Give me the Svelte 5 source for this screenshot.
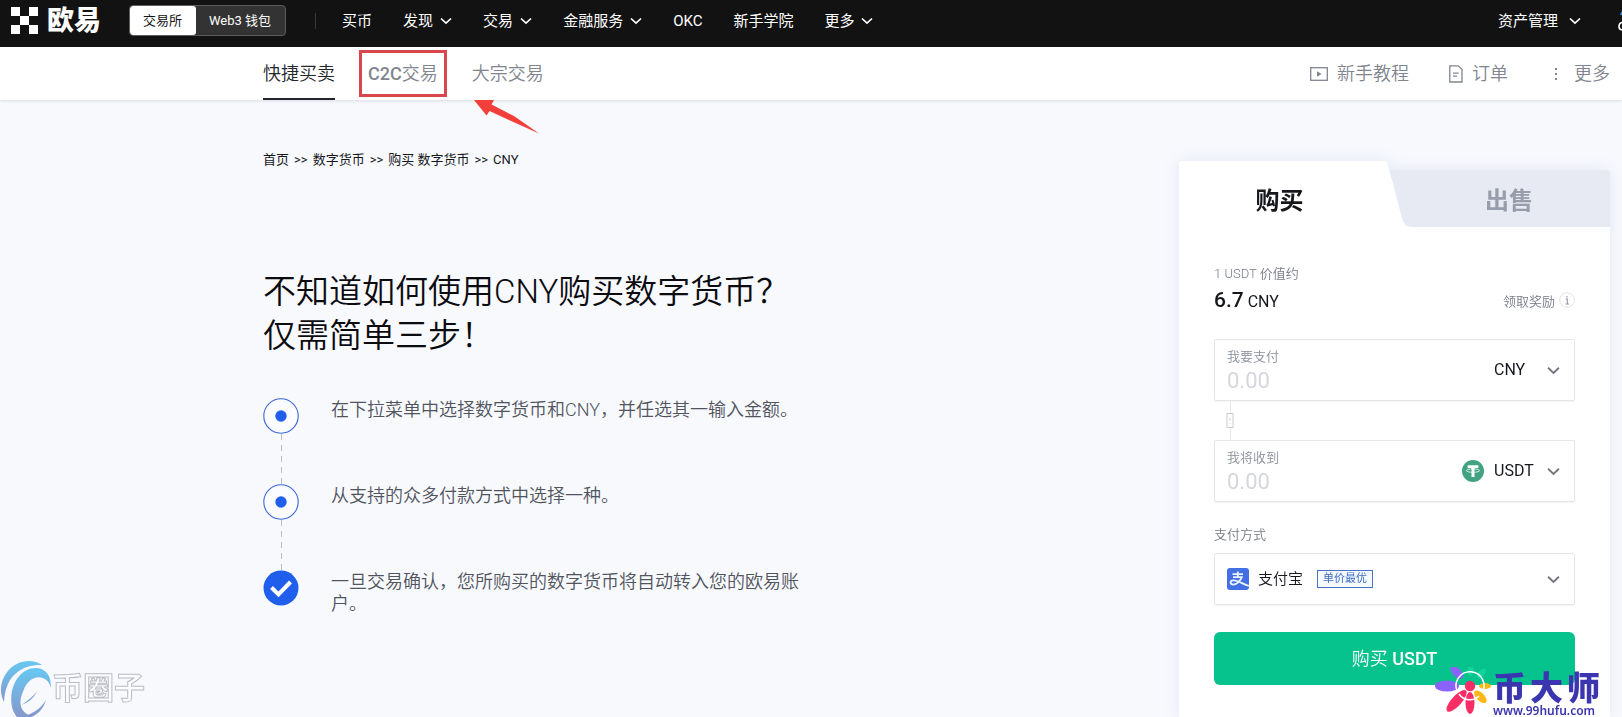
<script>
  const mainNav = [
    { label: '买币' },
    { label: '发现', menu: true },
    { label: '交易', menu: true },
    { label: '金融服务', menu: true },
    { label: 'OKC' },
    { label: '新手学院' },
    { label: '更多', menu: true }
  ];

  const steps = [
    { text: '在下拉菜单中选择数字货币和CNY，并任选其一输入金额。' },
    { text: '从支持的众多付款方式中选择一种。' },
    { text: '一旦交易确认，您所购买的数字货币将自动转入您的欧易账户。', done: true }
  ];
</script>

{#snippet chevron()}
  <svg class="chevron" viewBox="0 0 12 8" width="12" height="8" aria-hidden="true">
    <path d="M1 1.5 L6 6.2 L11 1.5" fill="none" stroke="currentColor" stroke-width="1.7" />
  </svg>
{/snippet}

<div class="page">
  <header class="topbar">
    <a class="brand" href="#home">
      <svg viewBox="0 0 27 27" width="27" height="27" aria-hidden="true">
        <path d="M0 0h9v9H0zM18 0h9v9h-9zM9 9h9v9H9zM0 18h9v9H0zM18 18h9v9h-9z" fill="#fff" />
      </svg>
      <span>欧易</span>
    </a>
    <div class="switch">
      <button class="on">交易所</button>
      <button>Web3 钱包</button>
    </div>
    <i class="divider"></i>
    <nav class="main-nav">
      {#each mainNav as item}
        <a href="#nav">{item.label}{#if item.menu}{@render chevron()}{/if}</a>
      {/each}
    </nav>
    <a class="assets" href="#assets">资产管理{@render chevron()}</a>
    <svg class="user" viewBox="0 0 4 24" width="4" height="24" aria-hidden="true">
      <path d="M4 2 Q2 4 2 6 L4 6Z" fill="#2f7fd6" />
      <path d="M4 13.5 Q1 14 1 17.5 Q1 20.5 4 21" fill="none" stroke="#fff" stroke-width="1.6" />
    </svg>
  </header>

  <div class="subbar">
    <nav class="tabs">
      <a class="current" href="#express">快捷买卖</a>
      <a class="c2c" href="#c2c"><b>C2C</b>交易</a>
      <a href="#block">大宗交易</a>
      <svg class="arrow" viewBox="0 0 66 35" width="66" height="35" aria-hidden="true">
        <path d="M0 0 L20 0 L17.5 4.5 L40 16 L65 33.5 L36 20.5 L15.5 11 L12.5 15.5 Z" fill="#f33f3a" />
      </svg>
    </nav>
    <nav class="tools">
      <a href="#guide">
        <svg viewBox="0 0 18 14" width="18" height="14" aria-hidden="true">
          <rect x=".7" y=".7" width="16.6" height="12.6" fill="none" stroke="currentColor" stroke-width="1.3" />
          <path d="M7 4.3 L11.6 7 L7 9.7Z" fill="currentColor" />
        </svg>新手教程</a>
      <a href="#orders">
        <svg viewBox="0 0 14 18" width="14" height="18" aria-hidden="true">
          <path d="M.8 .9 H9.3 L13 4.6 V17 H.8Z M4 8.2 H9.6 M4 11.2 H8" fill="none" stroke="currentColor" stroke-width="1.3" />
        </svg>订单</a>
      <a class="more" href="#more">
        <svg viewBox="0 0 4 14" width="4" height="14" aria-hidden="true">
          <path d="M1 1h2v2H1zM1 6h2v2H1zM1 11h2v2H1z" fill="currentColor" />
        </svg>更多</a>
    </nav>
  </div>

  <main>
    <section class="intro">
      <nav class="crumbs">
        <a href="#home">首页</a><span>&gt;&gt;</span><a href="#crypto">数字货币</a><span>&gt;&gt;</span><a href="#buy">购买 数字货币</a><span>&gt;&gt;</span><span>CNY</span>
      </nav>
      <h1>不知道如何使用CNY购买数字货币？<br />仅需简单三步！</h1>
      <ol>
        {#each steps as step}
          <li>
            <div class="mark">
              {#if step.done}
                <svg viewBox="0 0 36 36" width="36" height="36" aria-hidden="true">
                  <circle cx="18" cy="18" r="17.5" fill="#205fec" />
                  <path d="M8.5 17.5 L15.5 24.5 L27.5 12" fill="none" stroke="#fff" stroke-width="4" />
                </svg>
              {:else}
                <svg viewBox="0 0 36 36" width="36" height="36" aria-hidden="true">
                  <circle cx="18" cy="18" r="17.2" fill="#fafcff" stroke="#3c67d3" stroke-width="1.1" />
                  <circle cx="18" cy="18" r="5.7" fill="#205fec" />
                </svg>
                <i></i>
              {/if}
            </div>
            <p>{step.text}</p>
          </li>
        {/each}
      </ol>
    </section>

    <section class="card">
      <div class="card-tabs">
        <button class="buy">购买</button>
        <svg viewBox="0 0 28 66" width="28" height="66" aria-hidden="true">
          <path d="M4 9 H28.5 V66 H10Z" fill="#e7eaf2" />
          <path d="M0 0 C3 0 3.5 2 4.5 6 L18 57 Q20 66 28 66 H0Z" fill="#fff" />
        </svg>
        <button class="sell">出售</button>
      </div>
      <form class="card-body" onsubmit={(e) => e.preventDefault()}>
        <div class="rate">1 USDT 价值约</div>
        <div class="price">
          <div><strong>6.7</strong> CNY</div>
          <a href="#reward">领取奖励
            <svg viewBox="0 0 16 16" width="16" height="16" aria-hidden="true">
              <circle cx="8" cy="8" r="7.3" fill="#fff" stroke="#e2e4e8" />
              <path d="M8 4v1.5M6.8 7H8.3V12M6.5 12H10" fill="none" stroke="#92969f" stroke-width="1.1" />
            </svg>
          </a>
        </div>

        <div class="field">
          <div class="amount">
            <label for="pay">我要支付</label>
            <input id="pay" type="text" placeholder="0.00" />
          </div>
          <select aria-label="CNY"><option>CNY</option></select>
          {@render chevron()}
        </div>
        <div class="link">
          <svg viewBox="0 0 8 39" width="8" height="39" aria-hidden="true">
            <path d="M4.5 0V12M4.5 28V39" stroke="#e6e8ec" />
            <rect x="1" y="12.5" width="6" height="14" fill="#fff" stroke="#c9ccd3" />
            <path d="M4 17v3M4 22v1" stroke="#d6d8dd" />
          </svg>
        </div>
        <div class="field">
          <div class="amount">
            <label for="get">我将收到</label>
            <input id="get" type="text" placeholder="0.00" />
          </div>
          <svg class="coin" viewBox="0 0 22 22" width="22" height="22" aria-hidden="true">
            <circle cx="11" cy="11" r="11" fill="#41a381" />
            <path d="M5.6 5.2H16.4V8H12.5V17H9.5V8H5.6Z" fill="#fff" />
            <ellipse cx="11" cy="10.6" rx="6.6" ry="1.7" fill="none" stroke="#fff" stroke-width=".8" />
          </svg>
          <select aria-label="USDT"><option>USDT</option></select>
          {@render chevron()}
        </div>

        <label class="method-label" for="method">支付方式</label>
        <div class="field method">
          <svg viewBox="0 0 22 22" width="22" height="22" aria-hidden="true">
            <rect width="22" height="22" rx="3" fill="#446ee3" />
            <path d="M5.5 6.2H16M10.8 3.6V9M6 9.2H14.8C13.4 12.8 10 16.4 6.6 16.6C2.6 16.6 2.6 12.6 6.4 12.4C10.6 12.2 15 15.8 22 18" fill="none" stroke="#e8f4ff" stroke-width="1.8" />
          </svg>
          <select id="method"><option>支付宝</option></select>
          <span class="tag">单价最优</span>
          {@render chevron()}
        </div>
        <button class="submit" type="submit">购买 <b>USDT</b></button>
      </form>
    </section>
  </main>

  <div class="mark-left">
    <svg viewBox="0 0 156 174" width="52" height="58" aria-hidden="true">
      <defs>
        <linearGradient id="swirl" x1="0" y1="0" x2="0" y2="1">
          <stop offset="0" stop-color="#67c8f2" />
          <stop offset="1" stop-color="#8797cb" />
        </linearGradient>
      </defs>
      <path d="M126 15 C96 -6 48 1 22 35 C0 63 -3 98 12 126 C14 88 26 56 50 38 C72 20 98 14 126 15Z" fill="url(#swirl)" />
      <path d="M152 84 C156 50 138 26 110 24 C70 22 38 60 34 108 C32 140 40 160 54 174 H86 C110 168 130 148 138 121 C122 144 104 158 84 164 C58 150 56 122 70 92 C82 58 112 42 136 58 C145 64 150 72 152 84Z" fill="url(#swirl)" />
      <path d="M112 94 C100 116 84 128 66 134 C86 120 100 108 112 94Z" fill="#7fa8d8" />
    </svg>
    <span>币圈子</span>
  </div>

  <div class="mark-right">
    <svg viewBox="0 0 58 50" width="58" height="50" aria-hidden="true">
      <g transform="translate(35 19)">
        <ellipse cx="-23" cy="0" rx="12" ry="5.6" fill="#8b62fb" />
        <ellipse cx="-19" cy="0" rx="8" ry="4.2" fill="#8b62fb" transform="rotate(46)" />
        <ellipse cx="-16" cy="0" rx="6" ry="3" fill="#12d39c" transform="rotate(92)" />
        <ellipse cx="-17" cy="0" rx="6" ry="3" fill="#12d39c" transform="rotate(132)" />
        <ellipse cx="15" cy="0" rx="6" ry="3" fill="#fdb913" />
        <ellipse cx="15" cy="0" rx="8" ry="4" fill="#fdb913" transform="rotate(46)" />
        <ellipse cx="17" cy="0" rx="11" ry="4.5" fill="#fb2d67" transform="rotate(90)" />
        <ellipse cx="20" cy="0" rx="14" ry="5" fill="#fb2d67" transform="rotate(132)" />
        <path d="M-13 5 A14 14 0 1 1 12 7" fill="none" stroke="#fff" stroke-width="1.5" />
        <path d="M-11 8 A13 13 0 0 0 9 10" fill="none" stroke="#fff" stroke-width="1.5" />
        <circle r="5.2" fill="#fb2d67" />
      </g>
    </svg>
    <div>
      <strong><span>币</span><span>大</span><span>师</span></strong>
      <small>www.99hufu.com</small>
    </div>
  </div>
</div>

<style>
  :global(body) {
    background: #f8f9fd;
  }

  .page {
    display: flex;
    flex-direction: column;
    height: 100vh;
    overflow: hidden;
    font-family: Roboto, 'Noto Sans CJK SC', sans-serif;
    color: #15171c;
  }

  a {
    color: inherit;
    text-decoration: none;
  }

  button,
  input,
  select {
    font: inherit;
    color: inherit;
    border: 0;
    padding: 0;
    margin: 0;
    background: none;
  }

  select {
    appearance: none;
    outline: none;
  }

  svg {
    display: block;
    flex: none;
  }

  .topbar {
    display: flex;
    flex: none;
    align-items: center;
    height: 47px;
    box-sizing: border-box;
    padding: 0 0 6px 11px;
    background: #121212;
    color: #fff;
    font-size: 15px;
    line-height: 24px;
  }

  .brand {
    display: flex;
    align-items: center;
    gap: 9px;
    width: 118px;
    font-size: 27px;
    font-weight: 900;
    line-height: 30px;
  }

  .switch {
    display: flex;
    height: 31px;
    box-sizing: border-box;
    border: 1px solid #5c5c5c;
    border-radius: 4px;
    background: #333;
    font-size: 13px;
    overflow: hidden;
  }

  .switch button {
    padding: 0 14px 0 13px;
  }

  .switch .on {
    background: #fff;
    color: #121212;
    border-radius: 3px;
  }

  .divider {
    width: 1px;
    height: 16px;
    margin: 0 26px 0 29px;
    background: #3a3a3a;
  }

  .main-nav {
    display: flex;
    gap: 31px;
  }

  .main-nav a,
  .assets {
    display: flex;
    align-items: center;
    gap: 7px;
    white-space: nowrap;
  }

  .assets {
    gap: 11px;
    margin-left: auto;
    margin-right: 37px;
  }

  .subbar {
    display: flex;
    flex: none;
    justify-content: space-between;
    height: 53px;
    box-sizing: border-box;
    padding: 0 12px 0 263px;
    background: #fff;
    box-shadow: 0 1px 3px rgba(40, 50, 70, 0.14);
    color: #81858f;
    font-size: 18px;
    font-weight: 350;
    line-height: 24px;
  }

  .tabs {
    position: relative;
    display: flex;
  }

  .tabs a {
    box-sizing: border-box;
    padding-top: 15px;
  }

  .tabs .current {
    border-bottom: 2px solid #23262d;
    color: #23262d;
  }

  .tabs .c2c {
    height: 47px;
    margin: 3px 25px 0 24px;
    padding: 9px 6px 0;
    border: 3px solid #d9474c;
  }

  .c2c b {
    font-weight: 500;
  }

  .arrow {
    position: absolute;
    left: 211px;
    top: 53px;
  }

  .tools {
    display: flex;
    align-items: center;
    gap: 40px;
  }

  .tools a {
    display: flex;
    align-items: center;
    gap: 9px;
  }

  .tools .more {
    gap: 16px;
    margin-left: 6px;
  }

  main {
    display: flex;
    flex: 1;
    justify-content: space-between;
    padding: 0 12px 0 263px;
  }

  .intro {
    padding-top: 50px;
  }

  .crumbs {
    display: flex;
    gap: 5px;
    font-size: 13px;
    line-height: 20px;
  }

  h1 {
    margin: 100px 0 40px;
    color: #0b0b10;
    font-size: 33px;
    font-weight: 350;
    line-height: 44px;
  }

  ol {
    margin: 0;
    padding: 0;
    list-style: none;
  }

  li {
    display: flex;
    gap: 32px;
    height: 86px;
  }

  .mark {
    display: flex;
    flex-direction: column;
    align-items: center;
  }

  .mark i {
    flex: 1;
    width: 1px;
    background: repeating-linear-gradient(#b9bdc6 0 6px, transparent 6px 11px);
  }

  li p {
    width: 472px;
    margin: 0;
    padding-top: 1px;
    color: #50545d;
    font-size: 18px;
    font-weight: 350;
    line-height: 22px;
  }

  .card {
    display: flex;
    flex-direction: column;
    width: 431px;
    margin-top: 61px;
    filter: drop-shadow(0 0 8px rgba(70, 110, 180, 0.12));
  }

  .card-tabs {
    display: flex;
    align-items: flex-end;
    font-size: 24px;
    font-weight: 700;
  }

  .buy {
    width: 205px;
    height: 66px;
    padding: 8px 4px 0 0;
    background: #fff;
    border-radius: 3px 0 0;
  }

  .sell {
    flex: 1;
    height: 57px;
    padding: 0 4px 0 0;
    background: #e7eaf2;
    color: #989dab;
    border-radius: 0 3px 0 0;
  }

  .card-body {
    flex: 1;
    padding: 37px 35px 0;
    background: #fff;
  }

  .rate,
  .method-label {
    display: block;
    color: #777b86;
    font-size: 13px;
    font-weight: 350;
    line-height: 20px;
  }

  .price {
    display: flex;
    justify-content: space-between;
    align-items: center;
    height: 32px;
    margin-bottom: 23px;
    font-size: 16px;
  }

  .price strong {
    font-size: 21px;
    font-weight: 500;
  }

  .price a {
    display: flex;
    align-items: center;
    gap: 4px;
    color: #777b86;
    font-size: 13px;
    font-weight: 350;
  }

  .field {
    display: flex;
    align-items: center;
    height: 62px;
    box-sizing: border-box;
    padding: 0 14px 0 12px;
    border: 1px solid #e4e6ea;
    border-radius: 2px;
    box-shadow: 0 1px 1px rgba(30, 40, 60, 0.05);
    font-size: 16px;
    line-height: 24px;
  }

  .field .chevron {
    color: #72757e;
    width: 13px;
    height: 9px;
  }

  .amount {
    flex: 1;
    min-width: 0;
    color: #8b8f9a;
    font-size: 13px;
    font-weight: 350;
    line-height: 20px;
  }

  .amount label,
  .amount input {
    display: block;
  }

  .amount input {
    width: 100%;
    height: 26px;
    font-size: 22px;
    font-weight: 400;
  }

  .amount input::placeholder {
    color: #d5d7dd;
    opacity: 1;
  }

  .field select {
    width: 53px;
    height: 24px;
    font-weight: 400;
  }

  .coin {
    margin-right: 10px;
  }

  .link {
    padding-left: 12px;
  }

  .method-label {
    margin: 23px 0 8px;
  }

  .field.method {
    height: 52px;
  }

  .method select {
    width: 59px;
    margin-left: 9px;
    font-size: 15px;
    font-weight: 350;
  }

  .method .chevron {
    margin-left: auto;
  }

  .tag {
    padding: 0 5px;
    border: 1px solid #4774c9;
    background: #f5faff;
    color: #3f6dc6;
    font-size: 11px;
    line-height: 16px;
  }

  .submit {
    width: 100%;
    height: 53px;
    margin-top: 27px;
    padding-bottom: 3px;
    border-radius: 6px;
    background: #06c28d;
    color: #fff;
    font-size: 18px;
    font-weight: 350;
  }

  .submit b {
    font-weight: 500;
  }

  .mark-left {
    position: fixed;
    left: 0;
    bottom: -1px;
    display: flex;
    align-items: center;
  }

  .mark-left span {
    color: #fcfcfe;
    font-size: 31px;
    font-weight: 700;
    line-height: 40px;
    -webkit-text-stroke: 1px #b9bcc3;
  }

  .mark-right {
    position: fixed;
    right: 22px;
    bottom: 0;
    display: flex;
    align-items: flex-end;
    color: #3b36b0;
  }

  .mark-right strong {
    display: flex;
    gap: 4px;
    font-size: 33px;
    font-weight: 900;
    line-height: 33px;
  }

  .mark-right small {
    display: block;
    font: 600 12px/12px 'Noto Sans', sans-serif;
  }
</style>
